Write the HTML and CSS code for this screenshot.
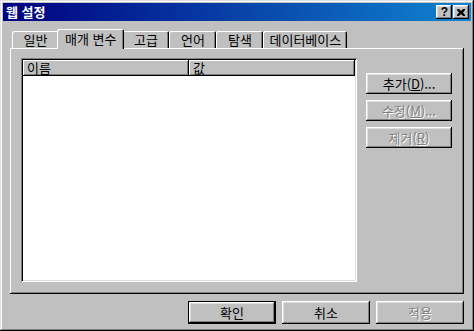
FILE: index.html
```html
<!DOCTYPE html>
<html lang="ko">
<head>
    <meta charset="UTF-8">
    <title>웹 설정</title>
    <link rel="stylesheet" href="styles.css">
</head>
<body>
    <div class="window">
        <div class="titlebar">
            <span class="title">웹 설정</span>
            <div class="title-buttons">
                <div class="title-btn help">?</div>
                <div class="title-btn close">
                    <svg width="8" height="7" viewBox="0 0 8 7">
                        <path d="M0 0h2l2 2 2-2h2v1L6 3.5 8 6v1H6L4 5 2 7H0V6l2-2.5L0 1z" fill="#000"/>
                    </svg>
                </div>
            </div>
        </div>

        <div class="dialog">
            <div class="tabs">
                <div class="tab">일반</div>
                <div class="tab active">매개 변수</div>
                <div class="tab">고급</div>
                <div class="tab">언어</div>
                <div class="tab">탐색</div>
                <div class="tab">데이터베이스</div>
            </div>

            <div class="panel">
                <div class="listview">
                    <div class="list-header">
                        <div class="col name">이름</div>
                        <div class="col value">값</div>
                    </div>
                    <div class="list-body"></div>
                </div>

                <div class="side-buttons">
                    <button class="btn">추가(<u>D</u>)...</button>
                    <button class="btn" disabled>수정(<u>M</u>)...</button>
                    <button class="btn" disabled>제거(<u>R</u>)</button>
                </div>
            </div>

            <div class="footer">
                <button class="btn wide default">확인</button>
                <button class="btn wide">취소</button>
                <button class="btn wide" disabled>적용</button>
            </div>
        </div>
    </div>
</body>
</html>
```

FILE: styles.css
```css
* {
    box-sizing: border-box;
}

body {
    margin: 0;
    background-color: #c0c0c0;
    font-family: "Noto Sans CJK KR", "DejaVu Sans", sans-serif;
    font-size: 13px;
}

.window {
    width: 474px;
    height: 331px;
    padding: 3px;
    display: flex;
    flex-direction: column;
    background-color: #c0c0c0;
    box-shadow: inset -1px -1px #000, inset 1px 1px #dfdfdf,
                inset -2px -2px #808080, inset 2px 2px #fff;
}

/* title bar */
.titlebar {
    height: 18px;
    display: flex;
    align-items: center;
    justify-content: space-between;
    padding: 0 2px 0 3px;
    background: linear-gradient(to right, #000080, #1084d0);
}

.title {
    color: #fff;
    font-weight: bold;
    line-height: 16px;
}

.title-buttons {
    display: flex;
    gap: 1px;
}

.title-btn {
    width: 16px;
    height: 14px;
    display: flex;
    align-items: center;
    justify-content: center;
    background-color: #c0c0c0;
    box-shadow: inset -1px -1px #000, inset 1px 1px #fff,
                inset -2px -2px #808080, inset 2px 2px #dfdfdf;
}

.title-btn.help {
    font-family: "Liberation Sans", sans-serif;
    font-weight: bold;
    font-size: 12px;
    line-height: 14px;
    padding-left: 1px;
}

/* dialog body */
.dialog {
    flex: 1;
    display: flex;
    flex-direction: column;
    padding: 8px 7px 4px 7px;
}

.tabs {
    display: flex;
    align-items: flex-end;
    height: 19px;
    padding-left: 2px;
    position: relative;
    z-index: 1;
}

.tab {
    height: 17px;
    min-width: 47px;
    padding: 0 6px;
    display: flex;
    align-items: center;
    justify-content: center;
    line-height: 15px;
    background-color: #c0c0c0;
    border-top-left-radius: 2px;
    border-top-right-radius: 2px;
    box-shadow: inset 1px 1px #fff, inset -1px 0 #000, inset -2px 0 #808080;
}

.tab.active {
    height: 20px;
    margin: 0 -2px -1px -2px;
    padding: 2px 8px 0 8px;
    position: relative;
    z-index: 2;
    align-items: flex-start;
}

.panel {
    height: 246px;
    display: flex;
    align-items: flex-start;
    gap: 9px;
    padding: 10px 0 0 11px;
    box-shadow: inset -1px -1px #000, inset 1px 1px #fff,
                inset -2px -2px #808080;
}

/* list view */
.listview {
    width: 336px;
    height: 224px;
    padding: 2px;
    display: flex;
    flex-direction: column;
    background-color: #fff;
    box-shadow: inset 1px 1px #808080, inset -1px -1px #fff,
                inset 2px 2px #000, inset -2px -2px #dfdfdf;
}

.list-header {
    display: flex;
    height: 16px;
}

.col {
    height: 16px;
    padding-left: 4px;
    line-height: 16px;
    background-color: #c0c0c0;
    box-shadow: inset -1px -1px #000, inset 1px 1px #fff,
                inset -2px -2px #808080;
}

.col.name {
    width: 166px;
}

.col.value {
    flex: 1;
}

.list-body {
    flex: 1;
}

/* buttons */
.side-buttons {
    display: flex;
    flex-direction: column;
    gap: 6px;
    margin-top: 15px;
}

.btn {
    width: 86px;
    height: 21px;
    padding: 0;
    border: none;
    font-family: inherit;
    font-size: 13px;
    line-height: 15px;
    color: #000;
    background-color: #c0c0c0;
    box-shadow: inset -1px -1px #000, inset 1px 1px #fff,
                inset -2px -2px #808080, inset 2px 2px #dfdfdf;
}

.btn u {
    text-underline-offset: 1px;
}

.btn:disabled {
    color: #808080;
    text-shadow: 1px 1px #fff;
}

.footer {
    display: flex;
    justify-content: flex-end;
    gap: 6px;
    margin-top: 7px;
}

.btn.wide {
    width: 88px;
    height: 23px;
}

.btn.default {
    box-shadow: inset -1px -1px #000, inset 1px 1px #000,
                inset -2px -2px #000, inset 2px 2px #fff,
                inset -3px -3px #808080, inset 3px 3px #dfdfdf;
}
```
